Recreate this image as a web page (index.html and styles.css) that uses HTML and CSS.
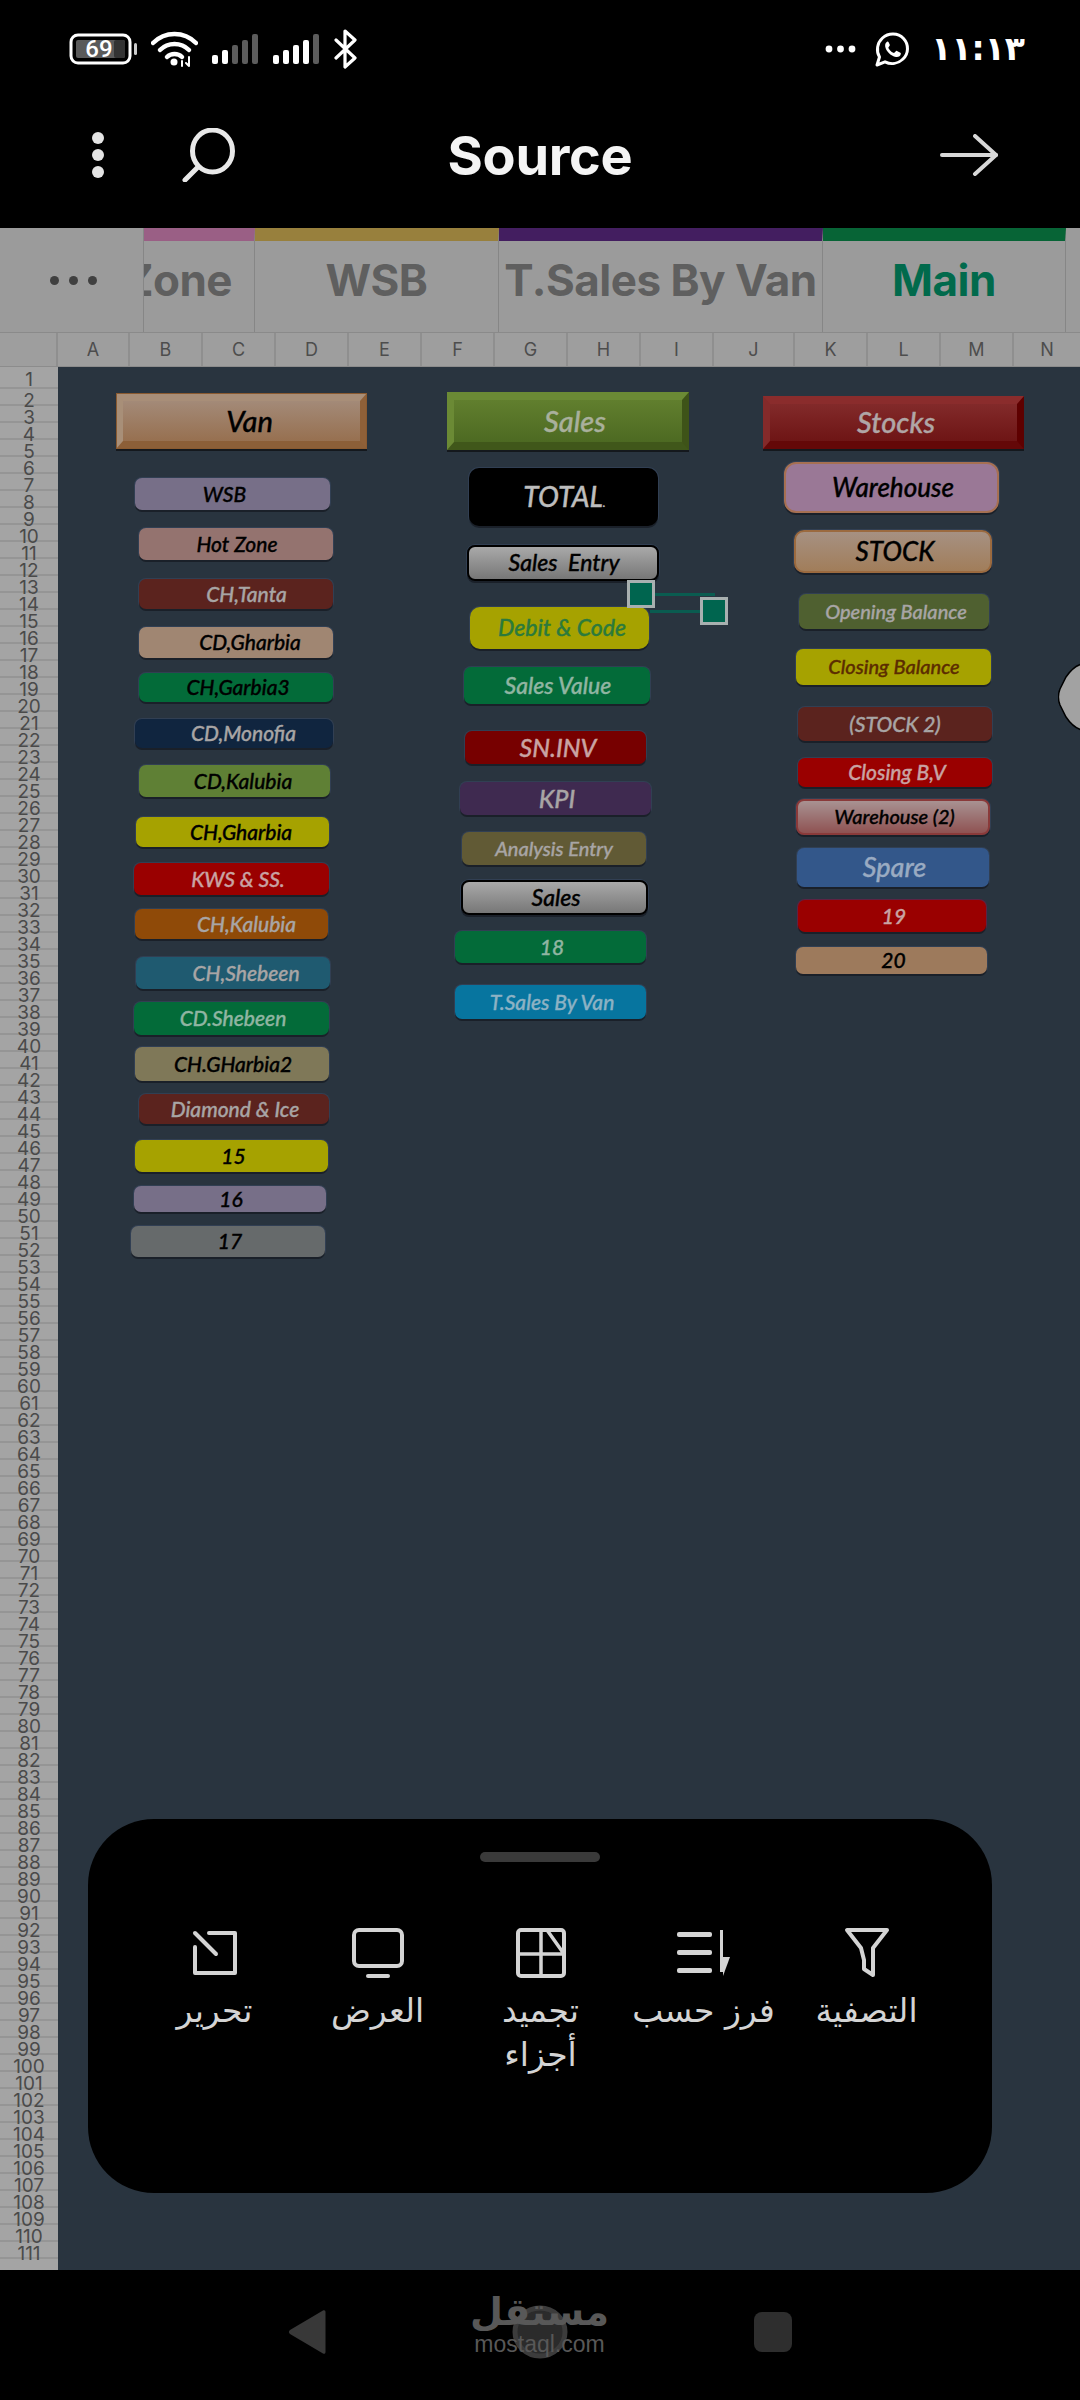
FILE: index.html
```html
<!DOCTYPE html>
<html lang="ar">
<head>
  <meta charset="UTF-8" />
  <meta name="viewport" content="width=device-width, initial-scale=1.0"/>
  <title>Source</title>
  <link rel="stylesheet" href="styles.css">
</head>
<body>
<div class="phone">

  <div class="statusbar">
    <div class="status-left">
      <svg class="ic-battery" width="70" height="32" viewBox="0 0 70 32">
        <rect x="2" y="2" width="59" height="28" rx="7" fill="none" stroke="#fff" stroke-width="3"/>
        <rect x="7" y="7" width="49" height="18" rx="2" fill="#5a5a5a"/>
        <rect x="45" y="7" width="11" height="18" rx="2" fill="#333"/>
        <rect x="65" y="10" width="3" height="12" rx="1.5" fill="#ccc"/>
        <text x="30" y="24" text-anchor="middle" class="battery-num">69</text>
      </svg>
      <svg class="ic-wifi" width="47" height="36" viewBox="0 0 47 36" fill="none" stroke="#fff" stroke-width="4.500" stroke-linecap="round">
        <path d="M2 12C14 0 33 0 45 12"/>
        <path d="M9 19C17 11 30 11 38 19"/>
        <path d="M16 26C20 22 27 22 31 26"/>
        <circle cx="23" cy="31" r="3.500" fill="#fff" stroke="none"/>
        <path d="M38 26V35M35 32L38 35" stroke-width="2"/>
        <path d="M31 35V30" stroke-width="2"/>
      </svg>
      <svg class="ic-signal" width="48" height="30" viewBox="0 0 48 30">
        <rect x="1" y="21" width="6" height="9" rx="2" fill="#fff"/>
        <rect x="11" y="16" width="6" height="14" rx="2" fill="#fff"/>
        <rect x="21" y="11" width="6" height="19" rx="2" fill="#5c5c5c"/>
        <rect x="31" y="6" width="6" height="24" rx="2" fill="#5c5c5c"/>
        <rect x="41" y="0" width="6" height="30" rx="2" fill="#5c5c5c"/>
      </svg>
      <svg class="ic-signal" width="48" height="30" viewBox="0 0 48 30">
        <rect x="1" y="21" width="6" height="9" rx="2" fill="#fff"/>
        <rect x="11" y="16" width="6" height="14" rx="2" fill="#fff"/>
        <rect x="21" y="11" width="6" height="19" rx="2" fill="#fff"/>
        <rect x="31" y="6" width="6" height="24" rx="2" fill="#fff"/>
        <rect x="41" y="0" width="6" height="30" rx="2" fill="#5c5c5c"/>
      </svg>
      <svg class="ic-bt" width="24" height="40" viewBox="0 0 24 40" fill="none" stroke="#fff" stroke-width="3.200" stroke-linejoin="round" stroke-linecap="round">
        <path d="M2 11L21 29L11 38V2L21 11L2 29"/>
      </svg>
    </div>
    <div class="status-right">
      <svg class="ic-more" width="31" height="8" viewBox="0 0 31 8" fill="#fff">
        <circle cx="4" cy="4" r="3.400"/><circle cx="15.500" cy="4" r="3.400"/><circle cx="27" cy="4" r="3.400"/>
      </svg>
      <svg class="ic-whatsapp" width="35" height="35" viewBox="0 0 35 35">
        <path d="M2 33L4.500 25C1 19 2 11 7.500 6C13.500 .5 23 .8 28.500 6.500C34 12.500 33.800 21.500 28 27C23 31.800 16 32.800 10 29.800Z" fill="none" stroke="#fff" stroke-width="3" stroke-linejoin="round"/>
        <path d="M12.500 9.500C11 10 9.800 12 10.200 14.500C11 19 15.500 24 21 25C23.500 25.400 25.500 24 25.800 22C26 21.200 25.500 20.800 25 20.500L22 19C21.400 18.700 21 18.900 20.600 19.400L19.600 20.600C19.200 21 18.800 21 18.300 20.800C16 19.700 14.500 18 13.500 16.200C13.300 15.700 13.400 15.400 13.700 15L14.600 13.800C14.900 13.400 14.900 13 14.700 12.500L13.500 10C13.300 9.600 13 9.400 12.500 9.500Z" fill="#fff"/>
      </svg>
      <span class="clock">١١:١٣</span>
    </div>
  </div>

  <div class="toolbar">
    <div class="toolbar-left">
      <div class="kebab"><i></i><i></i><i></i></div>
      <svg class="ic-search" width="54" height="54" viewBox="0 0 54 54" fill="none" stroke="#e8e8e8" stroke-width="5" stroke-linecap="round">
        <ellipse cx="30.500" cy="23" rx="20" ry="21"/>
        <path d="M16 39L3 52"/>
      </svg>
    </div>
    <h1 class="title">Source</h1>
    <div class="toolbar-right">
      <svg class="ic-arrow" width="60" height="42" viewBox="0 0 60 42" fill="none" stroke="#d8d8d8" stroke-width="4" stroke-linecap="round" stroke-linejoin="round">
        <path d="M3 21H57"/>
        <path d="M36 2L57 21L36 40"/>
      </svg>
    </div>
  </div>

  <div class="tabs">
    <div class="tab-more"><i></i><i></i><i></i></div>
    <div class="tab tab-zone"><span>Zone</span></div>
    <div class="tab tab-wsb"><span>WSB</span></div>
    <div class="tab tab-van"><span>T.Sales By Van</span></div>
    <div class="tab tab-main"><span>Main</span></div>
    <div class="tab tab-rest"></div>
  </div>

  <div class="colheads">
    <div class="corner"></div>
    <div class="col col-first">A</div><div class="col">B</div><div class="col">C</div><div class="col">D</div>
    <div class="col">E</div><div class="col">F</div><div class="col">G</div><div class="col">H</div>
    <div class="col">I</div><div class="col col-wide">J</div><div class="col">K</div><div class="col">L</div>
    <div class="col">M</div><div class="col col-last">N</div>
  </div>

  <div class="sheet">
    <div class="rowheads">
      <div class="row row-first">1</div><div class="row">2</div><div class="row">3</div><div class="row">4</div><div class="row">5</div>
      <div class="row">6</div><div class="row">7</div><div class="row">8</div><div class="row">9</div><div class="row">10</div>
      <div class="row">11</div><div class="row">12</div><div class="row">13</div><div class="row">14</div><div class="row">15</div>
      <div class="row">16</div><div class="row">17</div><div class="row">18</div><div class="row">19</div><div class="row">20</div>
      <div class="row">21</div><div class="row">22</div><div class="row">23</div><div class="row">24</div><div class="row">25</div>
      <div class="row">26</div><div class="row">27</div><div class="row">28</div><div class="row">29</div><div class="row">30</div>
      <div class="row">31</div><div class="row">32</div><div class="row">33</div><div class="row">34</div><div class="row">35</div>
      <div class="row">36</div><div class="row">37</div><div class="row">38</div><div class="row">39</div><div class="row">40</div>
      <div class="row">41</div><div class="row">42</div><div class="row">43</div><div class="row">44</div><div class="row">45</div>
      <div class="row">46</div><div class="row">47</div><div class="row">48</div><div class="row">49</div><div class="row">50</div>
      <div class="row">51</div><div class="row">52</div><div class="row">53</div><div class="row">54</div><div class="row">55</div>
      <div class="row">56</div><div class="row">57</div><div class="row">58</div><div class="row">59</div><div class="row">60</div>
      <div class="row">61</div><div class="row">62</div><div class="row">63</div><div class="row">64</div><div class="row">65</div>
      <div class="row">66</div><div class="row">67</div><div class="row">68</div><div class="row">69</div><div class="row">70</div>
      <div class="row">71</div><div class="row">72</div><div class="row">73</div><div class="row">74</div><div class="row">75</div>
      <div class="row">76</div><div class="row">77</div><div class="row">78</div><div class="row">79</div><div class="row">80</div>
      <div class="row">81</div><div class="row">82</div><div class="row">83</div><div class="row">84</div><div class="row">85</div>
      <div class="row">86</div><div class="row">87</div><div class="row">88</div><div class="row">89</div><div class="row">90</div>
      <div class="row">91</div><div class="row">92</div><div class="row">93</div><div class="row">94</div><div class="row">95</div>
      <div class="row">96</div><div class="row">97</div><div class="row">98</div><div class="row">99</div><div class="row">100</div>
      <div class="row">101</div><div class="row">102</div><div class="row">103</div><div class="row">104</div><div class="row">105</div>
      <div class="row">106</div><div class="row">107</div><div class="row">108</div><div class="row">109</div><div class="row">110</div>
      <div class="row">111</div>
    </div>

    <div class="canvas">
      <!-- left column -->
      <div class="shape bevel bevel-van s-van">Van</div>
      <div class="shape s-wsb fill-lilac ink-black">WSB</div>
      <div class="shape s-hot fill-rose ink-black">Hot Zone</div>
      <div class="shape s-tanta fill-maroon ink-pale">CH,Tanta</div>
      <div class="shape s-cdg fill-sand ink-black">CD,Gharbia</div>
      <div class="shape s-garbia3 fill-green ink-black">CH,Garbia3</div>
      <div class="shape s-monofia fill-navy ink-pale">CD,Monofia</div>
      <div class="shape s-kalubia fill-olive ink-black">CD,Kalubia</div>
      <div class="shape s-chg fill-yellow ink-black">CH,Gharbia</div>
      <div class="shape s-kws fill-red ink-pink">KWS &amp; SS.</div>
      <div class="shape s-chk fill-orange ink-pale">CH,Kalubia</div>
      <div class="shape s-chs fill-teal ink-pale">CH,Shebeen</div>
      <div class="shape s-cds fill-green ink-mint">CD.Shebeen</div>
      <div class="shape s-chg2 fill-khaki ink-black">CH.GHarbia2</div>
      <div class="shape s-diamond fill-maroon ink-pale">Diamond &amp; Ice</div>
      <div class="shape s-15 fill-yellow ink-black">15</div>
      <div class="shape s-16 fill-lilac ink-black">16</div>
      <div class="shape s-17 fill-grey ink-black">17</div>

      <!-- middle column -->
      <div class="shape bevel bevel-sales s-sales">Sales</div>
      <div class="shape s-total">TOTAL<small class="total-dot">.</small></div>
      <div class="shape glossy s-entry">Sales&nbsp; Entry</div>
      <div class="shape s-debit fill-yellow">Debit &amp; Code</div>
      <div class="shape s-value fill-green ink-mint">Sales Value</div>
      <div class="shape s-sninv fill-darkred ink-pink">SN.INV</div>
      <div class="shape s-kpi fill-purple ink-pale">KPI</div>
      <div class="shape s-analysis fill-mud ink-pale">Analysis Entry</div>
      <div class="shape glossy s-sales2">Sales</div>
      <div class="shape s-18 fill-green ink-mint">18</div>
      <div class="shape s-tsales fill-blue ink-sky">T.Sales By Van</div>

      <!-- right column -->
      <div class="shape bevel bevel-stocks s-stocks">Stocks</div>
      <div class="shape s-warehouse">Warehouse</div>
      <div class="shape s-stock">STOCK</div>
      <div class="shape s-opening fill-moss ink-pale">Opening Balance</div>
      <div class="shape s-closing fill-yellow">Closing Balance</div>
      <div class="shape s-stock2 fill-maroon ink-pale">(STOCK 2)</div>
      <div class="shape s-closingbv fill-red ink-pink">Closing B,V</div>
      <div class="shape s-wh2">Warehouse (2)</div>
      <div class="shape s-spare">Spare</div>
      <div class="shape s-19 fill-red ink-pink">19</div>
      <div class="shape s-20 fill-tan ink-black">20</div>

      <!-- selected connector -->
      <div class="sel-line sel-top"></div>
      <div class="sel-line sel-bottom"></div>
      <div class="sel-handle sel-a"></div>
      <div class="sel-handle sel-b"></div>

      <svg class="edge-shape" width="22" height="68" viewBox="0 0 22 68">
        <path d="M24 1C16 3 12 8 8 14L2 26C0 31 0 37 2 42L8 54C12 60 16 65 24 67Z" fill="#a2a2a2" stroke="#000" stroke-width="1.500"/>
      </svg>
    </div>
  </div>

  <div class="menu">
    <div class="menu-grip"></div>
    <div class="menu-items">
      <div class="menu-item">
        <svg width="46" height="52" viewBox="0 0 46 52" fill="none" stroke="#d4d4d4" stroke-width="4" stroke-linejoin="round" stroke-linecap="round">
          <path d="M3 3H43L29 21V48L20 42V33L17 21Z"/>
        </svg>
        <span>التصفية</span>
      </div>
      <div class="menu-item">
        <svg width="54" height="46" viewBox="0 0 54 46" fill="#d4d4d4">
          <rect x="0" y="2" width="35" height="5" rx="2"/>
          <rect x="0" y="20" width="35" height="5" rx="2"/>
          <rect x="0" y="38" width="35" height="5" rx="2"/>
          <rect x="43" y="0" width="3" height="42"/>
          <path d="M46 46V27L53 27Z"/>
        </svg>
        <span>فرز حسب</span>
      </div>
      <div class="menu-item">
        <svg width="50" height="50" viewBox="0 0 50 50" fill="none" stroke="#d4d4d4" stroke-width="3.500" stroke-linejoin="round">
          <rect x="2" y="2" width="46" height="46" rx="3" stroke-width="4"/>
          <path d="M2 26H48M25 2V48M31 2L48 26"/>
        </svg>
        <span>تجميد أجزاء</span>
      </div>
      <div class="menu-item">
        <svg width="54" height="52" viewBox="0 0 54 52" fill="none" stroke="#d4d4d4" stroke-width="4" stroke-linejoin="round" stroke-linecap="round">
          <rect x="3" y="3" width="48" height="36" rx="5"/>
          <path d="M17 49H37"/>
        </svg>
        <span>العرض</span>
      </div>
      <div class="menu-item">
        <svg width="46" height="46" viewBox="0 0 46 46" fill="none" stroke="#d4d4d4" stroke-width="4" stroke-linejoin="round" stroke-linecap="round">
          <path d="M17 3H43V43H3V17"/>
          <path d="M3 3L24 24"/>
        </svg>
        <span>تحرير</span>
      </div>
    </div>
  </div>

  <div class="navbar">
    <svg width="38" height="46" viewBox="0 0 38 46"><path d="M35 1.500L2 21C0.500 22 0.500 24 2 25L35 44.500C36.500 45.300 37.500 44.500 37.500 43V3C37.500 1.500 36.500 .7 35 1.500Z" fill="#383838"/></svg>
    <svg class="nav-home" width="56" height="54" viewBox="0 0 56 54"><ellipse cx="28" cy="27" rx="25" ry="24" fill="#2b2b2b" stroke="#3c3c3c" stroke-width="5"/></svg>
    <div class="nav-square"></div>
    <div class="watermark">
      <b>مستقل</b>
      <span>mostaql.com</span>
    </div>
  </div>

</div>
</body>
</html>
```

FILE: styles.css
```css
* {
  box-sizing: border-box;
}

body {
  margin: 0;
  background: #000;
  font-family: Inter, "Noto Sans", "DejaVu Sans", sans-serif;
}

.phone {
  position: relative;
  width: 1080px;
  height: 2400px;
  display: flex;
  flex-direction: column;
  overflow: hidden;
  background: #000;
}

/* status bar */
.statusbar {
  height: 82px;
  flex: none;
  display: flex;
  justify-content: space-between;
  align-items: center;
  padding: 16px 55px 0 69px;
}

.status-left,
.status-right {
  display: flex;
  align-items: center;
}

.ic-battery { margin-right: 12px; }
.ic-wifi { margin-right: 13px; }
.ic-signal { margin-right: 13px; }
.ic-bt { margin-left: 1px; }
.ic-more { margin-right: 19px; }
.ic-whatsapp { margin-right: 21px; }

.battery-num {
  font-family: Roboto, sans-serif;
  font-size: 24px;
  font-weight: 500;
  fill: #fff;
}

.clock {
  font-family: "DejaVu Sans", sans-serif;
  font-size: 33px;
  font-weight: bold;
  line-height: 34px;
  letter-spacing: -3px;
  color: #fff;
}

/* title row */
.toolbar {
  height: 146px;
  flex: none;
  display: grid;
  grid-template-columns: 1fr auto 1fr;
  align-items: center;
  padding: 0 81px;
}

.toolbar-left {
  display: flex;
  align-items: center;
  gap: 78px;
  padding-left: 11px;
}

.toolbar-right {
  display: flex;
  justify-content: flex-end;
}

.kebab {
  display: flex;
  flex-direction: column;
  gap: 5px;
}

.kebab i {
  width: 12px;
  height: 12px;
  border-radius: 50%;
  background: #e4e4e4;
}

.title {
  margin: 0;
  font-size: 54px;
  font-weight: 700;
  letter-spacing: -.3px;
  text-align: center;
  color: #f4f4f4;
}

/* sheet tabs */
.tabs {
  height: 104px;
  flex: none;
  display: flex;
  background: #9b9b9b;
}

.tab-more {
  width: 144px;
  flex: none;
  display: flex;
  align-items: center;
  gap: 10px;
  padding-left: 50px;
  border-right: 1px solid #868686;
}

.tab-more i {
  width: 9px;
  height: 9px;
  border-radius: 50%;
  background: #404040;
}

.tab {
  flex: none;
  display: flex;
  align-items: center;
  justify-content: center;
  overflow: hidden;
  border-top: 13px solid #777;
  border-right: 1px solid #868686;
  padding-bottom: 13px;
  font-size: 44px;
  font-weight: 700;
  letter-spacing: -.5px;
  color: #5f5f5f;
  white-space: nowrap;
}

.tab-zone { width: 111px; border-top-color: #9a5f85; justify-content: flex-end; padding-right: 22px; }
.tab-wsb { width: 244px; border-top-color: #98803d; }
.tab-van { width: 324px; border-top-color: #431e60; }
.tab-main { width: 243px; border-top-color: #076436; color: #016a4c; }
.tab-rest { flex: 1; border-top-color: #9b9b9b; border-right: 0; }

/* column letters */
.colheads {
  height: 35px;
  flex: none;
  display: flex;
  background: #9e9e9e;
  border-top: 1px solid #8a8a8a;
  border-bottom: 1px solid #8c8c8c;
}

.corner {
  width: 58px;
  flex: none;
  border-right: 2px solid #8f8f8f;
}

.col {
  width: 73px;
  flex: none;
  display: flex;
  align-items: center;
  justify-content: center;
  border-right: 2px solid #8f8f8f;
  font-size: 18px;
  color: #4d4d4d;
}

.col-first { width: 72px; }
.col-wide { width: 81px; }
.col-last { flex: 1; border-right: 0; }

/* sheet body */
.sheet {
  flex: 1;
  display: flex;
  min-height: 0;
}

.rowheads {
  width: 58px;
  flex: none;
  display: flex;
  flex-direction: column;
  background: #a4a4a4;
}

.row {
  height: 17px;
  flex: none;
  background: linear-gradient(#959595, #959595) 0 12px / 100% 2px no-repeat;
  font-size: 19px;
  line-height: 17px;
  text-align: center;
  color: #4a4a4a;
}

.row-first {
  height: 25px;
  line-height: 25px;
  background-position: 0 20px;
}

.canvas {
  position: relative;
  flex: 1;
  overflow: hidden;
  background: #29343f;
}

/* shapes sit freely on the sheet, like drawing objects in a workbook */
.shape {
  position: absolute;
  display: flex;
  align-items: center;
  justify-content: center;
  border-radius: 7px;
  box-shadow: 0 2px 0 #1a2029, 0 0 0 1px rgba(70, 90, 130, .3);
  padding-bottom: 2px;
  font-family: Lato, "Open Sans", sans-serif;
  font-size: 21px;
  font-style: italic;
  font-weight: 500;
  -webkit-text-stroke: .35px currentColor;
  white-space: nowrap;
}

.fill-lilac { background: #776f88; }
.fill-rose { background: #94736f; }
.fill-maroon { background: #5b231e; }
.fill-sand { background: #a08672; }
.fill-green { background: #036b39; }
.fill-navy { background: #10253f; }
.fill-olive { background: #5f8035; }
.fill-yellow { background: #a6a200; }
.fill-red { background: #9a0000; }
.fill-orange { background: #8f4a08; }
.fill-teal { background: #1f5a70; }
.fill-khaki { background: #7f7858; }
.fill-grey { background: #666a6b; }
.fill-darkred { background: #770000; }
.fill-purple { background: #3f2a50; }
.fill-mud { background: #615a35; }
.fill-blue { background: #07759f; }
.fill-moss { background: #4f6030; }
.fill-tan { background: #9d7a5c; }

.ink-black { color: #000; }
.ink-pale { color: #a8a5a5; }
.ink-pink { color: #c9a3a3; }
.ink-mint { color: #90b5a2; }
.ink-sky { color: #8db2c4; }

.bevel {
  border-style: solid;
  border-width: 8px 7px;
  border-radius: 0;
  box-shadow: 0 2px 0 #14181d;
  font-size: 29px;
}

.bevel-van {
  border-color: #a88e78 #8f6038 #8c5f38 #a88f78;
  background: linear-gradient(#a38a78, #977050);
  outline: 1px solid #8a5a30;
  outline-offset: -1px;
  color: #000;
}

.bevel-sales {
  border-color: #6b8a35 #3e5318 #40571a #6b8a35;
  background: linear-gradient(#617f2e, #4d6a22);
  color: #a9b09c;
}

.bevel-stocks {
  border-color: #8a2c2c #5e0000 #640808 #842a2a;
  background: linear-gradient(#822a2a, #6e1515);
  color: #b0a6a6;
}

.glossy {
  border: 2px solid #000;
  border-radius: 8px;
  background: linear-gradient(#a9a9a9, #777);
  color: #000;
}

/* left column */
.s-van { left: 58px; top: 26px; width: 251px; height: 56px; padding-left: 16px; }
.s-wsb { left: 77px; top: 111px; width: 195px; height: 32px; padding-right: 16px; }
.s-hot { left: 81px; top: 161px; width: 194px; height: 32px; padding-left: 2px; }
.s-tanta { left: 81px; top: 212px; width: 194px; height: 30px; padding-left: 21px; }
.s-cdg { left: 81px; top: 260px; width: 194px; height: 31px; padding-left: 28px; }
.s-garbia3 { left: 81px; top: 306px; width: 194px; height: 29px; padding-left: 4px; }
.s-monofia { left: 77px; top: 352px; width: 198px; height: 29px; padding-left: 19px; }
.s-kalubia { left: 81px; top: 398px; width: 191px; height: 32px; padding-left: 17px; }
.s-chg { left: 78px; top: 450px; width: 193px; height: 30px; padding-left: 17px; }
.s-kws { left: 76px; top: 496px; width: 195px; height: 32px; padding-left: 13px; }
.s-chk { left: 77px; top: 542px; width: 193px; height: 30px; padding-left: 30px; }
.s-chs { left: 78px; top: 590px; width: 194px; height: 32px; padding-left: 26px; }
.s-cds { left: 76px; top: 635px; width: 195px; height: 33px; padding-left: 3px; }
.s-chg2 { left: 77px; top: 680px; width: 194px; height: 34px; padding-left: 2px; }
.s-diamond { left: 81px; top: 727px; width: 190px; height: 30px; padding-left: 2px; }
.s-15 { left: 77px; top: 773px; width: 193px; height: 32px; padding-left: 4px; }
.s-16 { left: 76px; top: 819px; width: 192px; height: 26px; padding-left: 2px; }
.s-17 { left: 73px; top: 859px; width: 194px; height: 31px; padding-left: 4px; }

/* middle column */
.s-sales { left: 389px; top: 25px; width: 242px; height: 58px; padding-left: 14px; }
.s-total {
  left: 411px; top: 101px; width: 189px; height: 58px; padding-left: 2px;
  border-radius: 10px;
  background: #000;
  color: #bdbdbd;
  font-size: 28px;
}
.total-dot { font-size: 12px; align-self: flex-end; margin-bottom: 14px; }
.s-entry { left: 409px; top: 178px; width: 192px; height: 36px; padding-left: 2px; font-size: 23px; }
.s-debit {
  left: 412px; top: 240px; width: 179px; height: 42px; padding-left: 5px;
  border-radius: 10px;
  color: #2c7a3c;
  font-size: 23px;
}
.s-value { left: 406px; top: 300px; width: 186px; height: 37px; padding-left: 2px; font-size: 23px; }
.s-sninv { left: 407px; top: 364px; width: 181px; height: 33px; padding-left: 5px; font-size: 25px; }
.s-kpi { left: 402px; top: 415px; width: 191px; height: 33px; padding-left: 3px; font-size: 25px; }
.s-analysis { left: 404px; top: 465px; width: 184px; height: 33px; font-size: 20px; }
.s-sales2 { left: 403px; top: 513px; width: 187px; height: 35px; padding-left: 3px; font-size: 23px; }
.s-18 { left: 397px; top: 564px; width: 191px; height: 32px; padding-left: 3px; }
.s-tsales { left: 397px; top: 618px; width: 191px; height: 34px; padding-left: 3px; }

/* right column */
.s-stocks { left: 705px; top: 29px; width: 261px; height: 53px; padding-left: 5px; }
.s-warehouse {
  left: 726px; top: 95px; width: 215px; height: 51px; padding-left: 3px;
  border: 2px solid #a67052;
  border-radius: 12px;
  background: #9a7896;
  color: #000;
  font-size: 26px;
}
.s-stock {
  left: 736px; top: 163px; width: 198px; height: 43px; padding-left: 4px;
  border: 2px solid #9b6a3f;
  border-radius: 10px;
  background: linear-gradient(#a69182, #a17d5a);
  color: #000;
  font-size: 26px;
}
.s-opening { left: 741px; top: 227px; width: 190px; height: 35px; padding-left: 4px; font-size: 20px; }
.s-closing { left: 738px; top: 282px; width: 195px; height: 36px; padding-left: 1px; color: #5b2c00; font-size: 20px; }
.s-stock2 { left: 740px; top: 340px; width: 194px; height: 34px; }
.s-closingbv { left: 740px; top: 391px; width: 194px; height: 29px; padding-left: 4px; }
.s-wh2 {
  left: 738px; top: 432px; width: 194px; height: 36px; padding-left: 3px;
  border: 2px solid #8a3a3a;
  border-radius: 8px;
  background: linear-gradient(#a89292, #8f5252);
  color: #000;
  font-size: 20px;
}
.s-spare { left: 739px; top: 481px; width: 192px; height: 39px; padding-left: 3px; background: #33578a; color: #9aabc2; font-size: 27px; }
.s-19 { left: 740px; top: 533px; width: 188px; height: 32px; padding-left: 4px; box-shadow: 0 2px 0 #1a2029, 0 0 0 1px #5d2244; }
.s-20 { left: 738px; top: 580px; width: 191px; height: 27px; padding-left: 4px; }

/* selection on the connector */
.sel-line {
  position: absolute;
  height: 3px;
  background: #0a5c50;
}

.sel-top { left: 597px; top: 226px; width: 60px; }
.sel-bottom { left: 592px; top: 243px; width: 50px; }

.sel-handle {
  position: absolute;
  width: 28px;
  height: 28px;
  border: 3px solid #a8b0b0;
  background: #00654f;
}

.sel-a { left: 569px; top: 213px; }
.sel-b { left: 642px; top: 230px; }

.edge-shape {
  position: absolute;
  left: 1000px;
  top: 296px;
}

/* bottom menu */
.menu {
  position: absolute;
  left: 88px;
  top: 1819px;
  width: 904px;
  height: 374px;
  border-radius: 66px;
  background: #000;
  padding: 33px 44px 0;
}

.menu-grip {
  width: 120px;
  height: 10px;
  margin: 0 auto;
  border-radius: 5px;
  background: #3a3a3a;
}

.menu-items {
  display: flex;
  direction: rtl;
  margin-top: 65px;
}

.menu-item {
  width: 163px;
  flex: none;
  display: flex;
  flex-direction: column;
  align-items: center;
}

.menu-item svg {
  height: 52px;
}

.menu-item span {
  margin-top: 10px;
  width: 150px;
  font-family: "DejaVu Sans", sans-serif;
  font-size: 33px;
  line-height: 44px;
  text-align: center;
  color: #d4d4d4;
}

/* nav bar */
.navbar {
  position: relative;
  height: 130px;
  flex: none;
  display: flex;
  align-items: center;
  justify-content: space-between;
  padding: 0 288px 6px 288px;
}

.nav-square {
  width: 38px;
  height: 40px;
  border-radius: 8px;
  background: #2e2e2e;
}

.watermark {
  position: absolute;
  left: 474px;
  top: 20px;
  width: 131px;
  display: flex;
  flex-direction: column;
  align-items: center;
  color: #585858;
}

.watermark b {
  font-family: "DejaVu Sans", sans-serif;
  font-size: 38px;
  line-height: 44px;
}

.watermark span {
  font-family: "Liberation Sans", sans-serif;
  font-size: 23px;
  line-height: 20px;
}
```
